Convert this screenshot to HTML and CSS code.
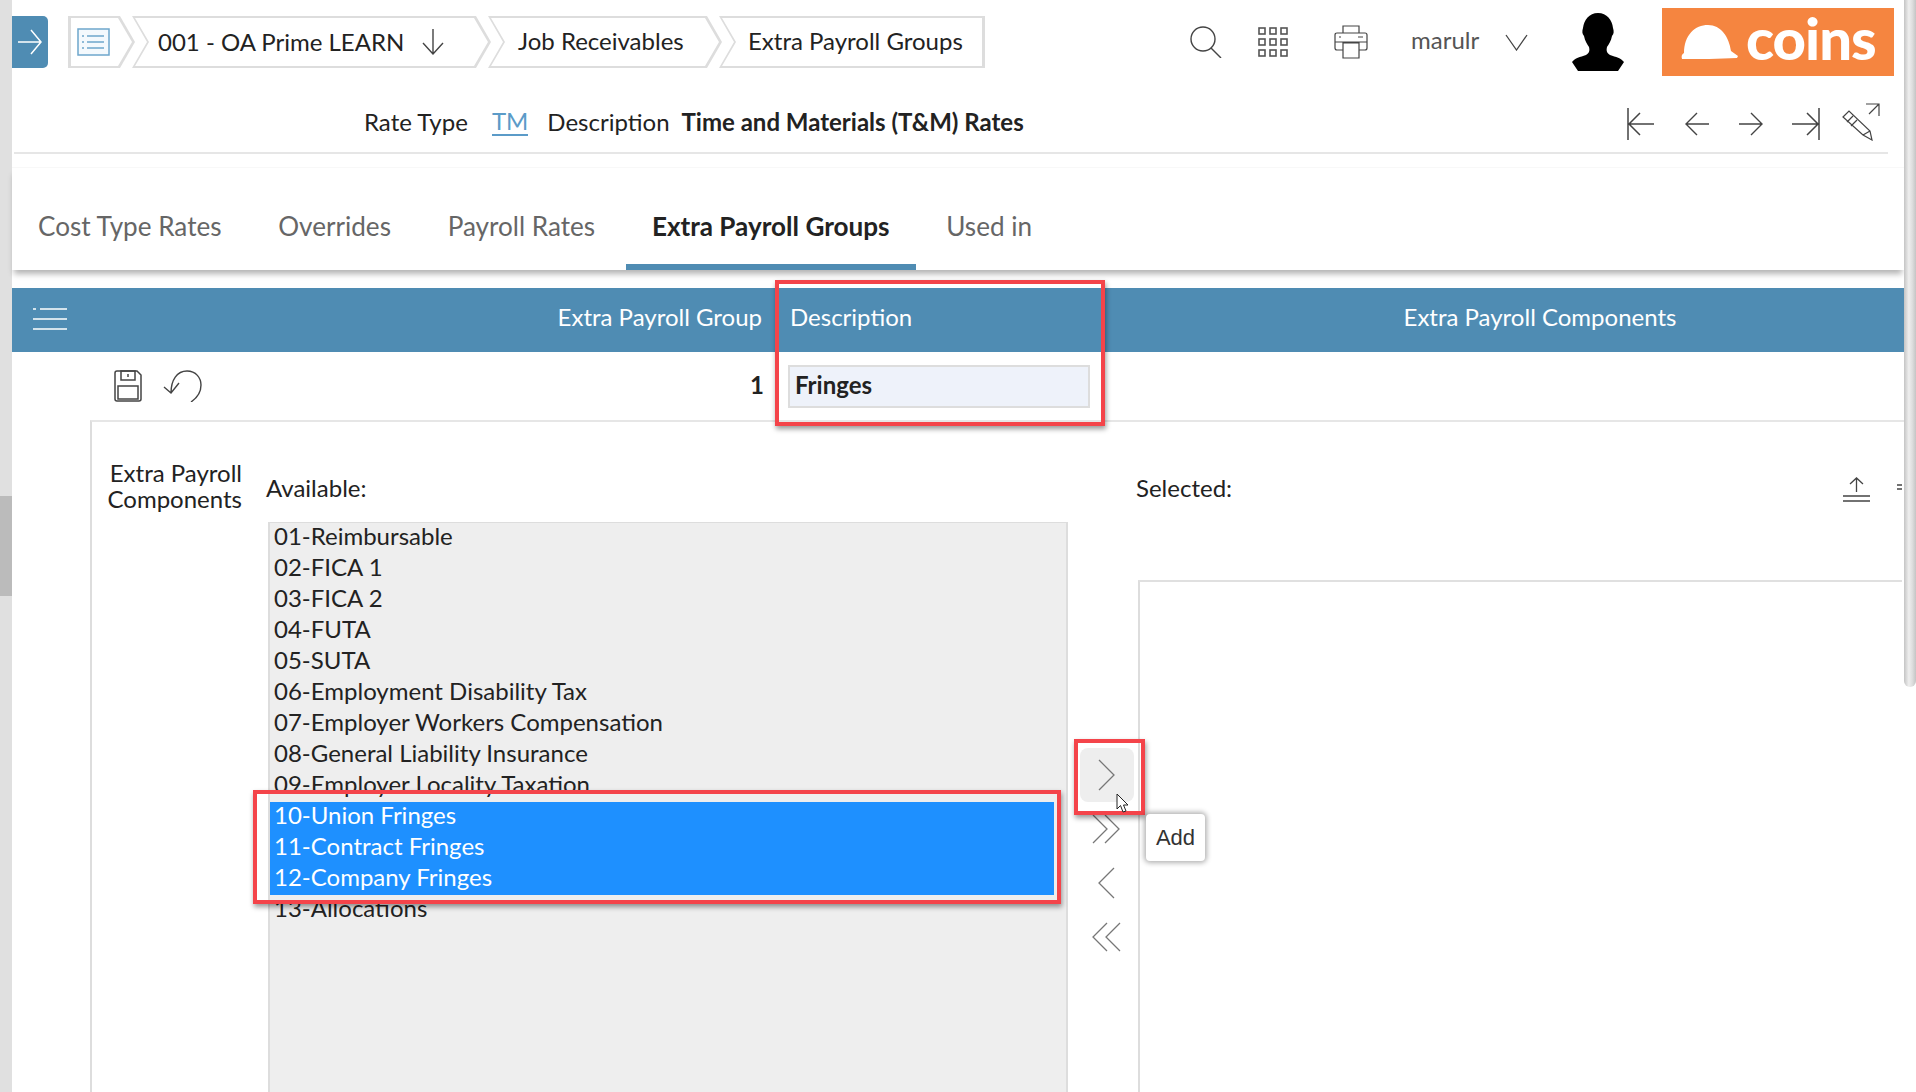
FILE: index.html
```html
<!DOCTYPE html>
<html lang="en">
<head>
    <meta charset="UTF-8">
    <title>Extra Payroll Groups</title>
    <link rel="stylesheet" href="styles.css">
</head>
<body>
<div class="page">
    <div class="rail"><div class="rail-thumb"></div></div>

    <div class="main">
        <div class="topbar">
            <button class="menu-toggle">
                <svg width="24" height="26" viewBox="0 0 24 26"><path d="M0 13H23M13 1L23 13L13 25" fill="none" stroke="#fff" stroke-width="1.5"/></svg>
            </button>
            <div class="crumbs">
                <div class="crumb crumb-first">
                    <svg width="33" height="28" viewBox="0 0 33 28"><rect x="1" y="1" width="31" height="26" fill="#f4f9fd" stroke="#6ea6cc" stroke-width="1.5"/><path d="M5 8H7M10 8H27M5 14H7M10 14H27M5 20H7M10 20H27" stroke="#6ea6cc" stroke-width="1.5"/></svg>
                </div>
                <div class="crumb crumb-job">001 - OA Prime LEARN
                    <svg class="crumb-arrow" width="24" height="26" viewBox="0 0 24 26"><path d="M12 0V25M2 14L12 25L22 14" fill="none" stroke="#444" stroke-width="1.4"/></svg>
                </div>
                <div class="crumb crumb-recv">Job Receivables</div>
                <div class="crumb crumb-last">Extra Payroll Groups</div>
            </div>

            <div class="top-right">
                <svg class="ico-search" width="32" height="32" viewBox="0 0 32 32"><circle cx="13" cy="13" r="12" fill="none" stroke="#444" stroke-width="1.4"/><path d="M21 22L31 32" stroke="#444" stroke-width="1.4"/></svg>
                <svg class="ico-grid" width="30" height="30" viewBox="0 0 30 30" fill="none" stroke="#555" stroke-width="1.6">
                    <rect x="1" y="1" width="6" height="6"/><rect x="12" y="1" width="6" height="6"/><rect x="23" y="1" width="6" height="6"/>
                    <rect x="1" y="12" width="6" height="6"/><rect x="12" y="12" width="6" height="6"/><rect x="23" y="12" width="6" height="6"/>
                    <rect x="1" y="23" width="6" height="6"/><rect x="12" y="23" width="6" height="6"/><rect x="23" y="23" width="6" height="6"/>
                </svg>
                <svg class="ico-print" width="34" height="34" viewBox="0 0 34 34" fill="none" stroke="#444" stroke-width="1.2"><path d="M9 8V1H25V8"/><path d="M9 25H3Q1 25 1 23V10Q1 8 3 8H31Q33 8 33 10V23Q33 25 31 25H25"/><path d="M9 18H25V33H9ZM1 17H33M5 12H7M24 12H29"/></svg>
                <span class="user-name">marulr</span>
                <svg class="ico-chev" width="23" height="17" viewBox="0 0 23 17"><path d="M1 1L11.5 16L22 1" fill="none" stroke="#444" stroke-width="1.3"/></svg>
                <svg class="ico-person" width="52" height="58" viewBox="0 0 52 58"><path d="M26 0C35 0 40 7 41 15C42 18 42 21 40 23C39 28 37 31 35 34C34 38 35 40 38 42C44 44 49 45 52 49L46 58H6L0 49C3 45 8 44 14 42C17 40 18 38 17 34C15 31 13 28 12 23C10 21 10 18 11 15C12 7 17 0 26 0Z" fill="#000"/></svg>
                <div class="logo">
                    <svg width="58" height="34" viewBox="0 0 58 34"><path d="M1 34C0 31 1 29 3 28C3 10 14 0 27 0C40 0 48 12 50 26L57 31L56 33C38 34 18 34 1 34Z" fill="#fff"/></svg>
                    <span class="logo-text">coins</span>
                </div>
            </div>
        </div>

        <div class="meta-row">
            <span class="meta-label">Rate Type</span>
            <a class="meta-link">TM</a>
            <span class="meta-label meta-desc">Description</span>
            <strong class="meta-value">Time and Materials (T&amp;M) Rates</strong>
            <div class="record-nav">
                <svg width="28" height="32" viewBox="0 0 28 32" fill="none" stroke="#444" stroke-width="1.5"><path d="M1 0V32M27 16H2M13 5L2 16L13 27"/></svg>
                <svg class="nav-prev" width="24" height="24" viewBox="0 0 24 24" fill="none" stroke="#444" stroke-width="1.4"><path d="M24 12H1M12 1L1 12L12 23"/></svg>
                <svg class="nav-next" width="24" height="24" viewBox="0 0 24 24" fill="none" stroke="#444" stroke-width="1.4"><path d="M0 12H23M12 1L23 12L12 23"/></svg>
                <svg class="nav-last" width="28" height="32" viewBox="0 0 28 32" fill="none" stroke="#444" stroke-width="1.5"><path d="M27 0V32M0 16H26M15 5L26 16L15 27"/></svg>
                <svg class="nav-edit" width="38" height="38" viewBox="0 0 38 38" fill="none" stroke="#444" stroke-width="1.2"><path d="M1 14L7 8L28 28L30 37L21 32ZM5 19L11 13M9 23L15 17M21 32L28 28M24 1H37V13M37 1L27 11"/></svg>
            </div>
        </div>

        <div class="tabs">
            <div class="tab">Cost Type Rates</div>
            <div class="tab">Overrides</div>
            <div class="tab">Payroll Rates</div>
            <div class="tab tab-active">Extra Payroll Groups</div>
            <div class="tab">Used in</div>
        </div>

        <div class="grid-head">
            <div class="col-group">
                <svg class="ico-lines" width="34" height="22" viewBox="0 0 34 22"><path d="M0 1H3M7 1H34M0 11H34M0 21H34" stroke="#fff" stroke-width="1.5"/></svg>
                <span>Extra Payroll Group</span>
            </div>
            <div class="col-desc">Description</div>
            <div class="col-comp">Extra Payroll Components</div>
        </div>

        <div class="edit-row">
            <div class="col-group">
                <svg class="ico-save" width="28" height="32" viewBox="0 0 28 32" fill="none" stroke="#444" stroke-width="1.5"><path d="M1 3Q1 1 3 1H23L27 5V29Q27 31 25 31H3Q1 31 1 29Z"/><rect x="7" y="1" width="14" height="9"/><path d="M14 4V7"/><rect x="4" y="16" width="20" height="13"/></svg>
                <svg class="ico-undo" width="39" height="32" viewBox="0 0 39 32" fill="none" stroke="#444" stroke-width="1.4"><path d="M8 23C8 10 14 1 24 1C33 1 38 8 38 15C38 23 34 28 28 32M1 17L8 23L16 13"/></svg>
                <strong class="row-id">1</strong>
            </div>
            <div class="col-desc"><div class="text-input">Fringes</div></div>
        </div>

        <div class="panel">
            <div class="panel-label">Extra Payroll<br>Components</div>

            <div class="avail-col">
                <div class="pick-label">Available:</div>
                <div class="list">
                    <div class="item">01-Reimbursable</div>
                    <div class="item">02-FICA 1</div>
                    <div class="item">03-FICA 2</div>
                    <div class="item">04-FUTA</div>
                    <div class="item">05-SUTA</div>
                    <div class="item">06-Employment Disability Tax</div>
                    <div class="item">07-Employer Workers Compensation</div>
                    <div class="item">08-General Liability Insurance</div>
                    <div class="item">09-Employer Locality Taxation</div>
                    <div class="item item-selected">10-Union Fringes</div>
                    <div class="item item-selected">11-Contract Fringes</div>
                    <div class="item item-selected">12-Company Fringes</div>
                    <div class="item">13-Allocations</div>
                </div>
            </div>

            <div class="move-col">
                <button class="move-btn move-btn-hover"><svg width="30" height="32" viewBox="0 0 30 32"><path d="M7 1L22 16L7 31" fill="none" stroke="#777" stroke-width="1.3"/></svg></button>
                <button class="move-btn"><svg width="30" height="32" viewBox="0 0 30 32" fill="none" stroke="#777" stroke-width="1.3"><path d="M1 2L15 16L1 30M13 2L27 16L13 30"/></svg></button>
                <button class="move-btn"><svg width="30" height="32" viewBox="0 0 30 32"><path d="M22 1L7 16L22 31" fill="none" stroke="#777" stroke-width="1.3"/></svg></button>
                <button class="move-btn"><svg width="30" height="32" viewBox="0 0 30 32" fill="none" stroke="#777" stroke-width="1.3"><path d="M15 2L1 16L15 30M28 2L14 16L28 30"/></svg></button>
            </div>

            <div class="sel-col">
                <div class="sel-head">
                    <div class="pick-label">Selected:</div>
                    <svg class="ico-upload" width="27" height="25" viewBox="0 0 27 25" fill="none" stroke="#444" stroke-width="1.3"><path d="M13.500 15V1M7 7L13.500 1L20 7M0 19H27M0 24H27"/></svg>
                    <svg class="ico-tiny" width="5" height="6" viewBox="0 0 5 6"><path d="M0 1H5M0 5H5" stroke="#444" stroke-width="1.3"/></svg>
                </div>
                <div class="sel-box"></div>
            </div>
        </div>
    </div>

    <div class="scrollbar"><div class="scroll-thumb"></div></div>

    <!-- annotations drawn on top of the screenshot -->
    <div class="callout callout-desc"></div>
    <div class="callout callout-rows"></div>
    <div class="callout callout-add"></div>
    <div class="tooltip">Add</div>
    <svg class="cursor" width="13" height="20" viewBox="0 0 13 20"><path d="M1 1V16L4.500 12.500L7 19L10 18L7.500 12H12Z" fill="#fff" stroke="#222" stroke-width="1"/></svg>
</div>
</body>
</html>
```

FILE: styles.css
```css
body {
    margin: 0;
    font-family: Lato, "Open Sans", sans-serif;
    color: #222;
    background-color: #fff;
}
button {
    border: none;
    padding: 0;
    background: none;
}
svg {
    display: block;
    flex-shrink: 0;
}
.page {
    position: relative;
    display: flex;
    height: 1092px;
    overflow: hidden;
}
.rail {
    width: 12px;
    background-color: #e0e0e0;
    padding-top: 496px;
    box-sizing: border-box;
}
.rail-thumb {
    height: 100px;
    background-color: #bbb;
}
.main {
    flex: 1;
    min-width: 0;
    display: flex;
    flex-direction: column;
}
.scrollbar {
    width: 12px;
}
.scroll-thumb {
    height: 687px;
    border-radius: 0 0 6px 6px;
    background: linear-gradient(to right, #c4c4c4, #eee 40%, #ddd 70%, #c4c4c4);
}

/* top bar */
.topbar {
    display: flex;
    align-items: center;
    height: 84px;
    flex-shrink: 0;
}
.menu-toggle {
    width: 36px;
    height: 52px;
    background-color: #4f8cb3;
    border-radius: 0 5px 5px 0;
    display: flex;
    align-items: center;
    justify-content: center;
}
.crumbs {
    display: flex;
    margin-left: 20px;
    font-size: 24px;
}
.crumb {
    position: relative;
    height: 52px;
    display: flex;
    align-items: center;
    background-color: #ddd;
    margin-right: -3px;
    clip-path: polygon(0 0, calc(100% - 15px) 0, 100% 50%, calc(100% - 15px) 100%, 0 100%, 15px 50%);
    z-index: 0;
}
.crumb::before {
    content: "";
    position: absolute;
    inset: 2px 3px;
    background-color: #fff;
    clip-path: polygon(0 0, calc(100% - 14px) 0, 100% 50%, calc(100% - 14px) 100%, 0 100%, 14px 50%);
    z-index: -1;
}
.crumb-first {
    width: 67px;
    padding-left: 9px;
    box-sizing: border-box;
    clip-path: polygon(0 0, calc(100% - 15px) 0, 100% 50%, calc(100% - 15px) 100%, 0 100%);
}
.crumb-first::before {
    clip-path: polygon(0 0, calc(100% - 14px) 0, 100% 50%, calc(100% - 14px) 100%, 0 100%);
}
.crumb-job {
    width: 359px;
    padding: 0 0 2px 26px;
    box-sizing: border-box;
}
.crumb-arrow {
    margin: 2px 0 0 17px;
}
.crumb-recv {
    width: 234px;
    padding: 0 0 4px 30px;
    box-sizing: border-box;
}
.crumb-last {
    width: 266px;
    padding: 0 0 4px 29px;
    box-sizing: border-box;
    margin-right: 0;
    clip-path: polygon(0 0, 100% 0, 100% 100%, 0 100%, 15px 50%);
}
.crumb-last::before {
    clip-path: polygon(0 0, 100% 0, 100% 100%, 0 100%, 14px 50%);
}
.top-right {
    margin-left: auto;
    margin-right: 10px;
    display: flex;
    align-items: center;
}
.ico-grid { margin-left: 36px; }
.ico-print { margin-left: 46px; }
.user-name {
    margin-left: 43px;
    width: 68px;
    font-size: 24px;
    color: #555;
    padding-bottom: 6px;
}
.ico-chev { margin-left: 26px; }
.ico-person { margin-left: 44px; }
.logo {
    margin-left: 38px;
    width: 232px;
    height: 68px;
    background-color: #f58540;
    display: flex;
    align-items: center;
    box-sizing: border-box;
    padding-left: 19px;
}
.logo-text {
    margin-left: 7px;
    font-size: 58px;
    font-weight: 900;
    letter-spacing: -1px;
    color: #fff;
    line-height: 60px;
    padding-bottom: 8px;
}

/* record header */
.meta-row {
    display: flex;
    align-items: center;
    height: 62px;
    flex-shrink: 0;
    margin: 0 16px 0 2px;
    padding: 6px 0 0 350px;
    border-bottom: 2px solid #e6e6e6;
    font-size: 24px;
}
.meta-link {
    margin-left: 24px;
    color: #5b9bc8;
    border-bottom: 2px solid #5b9bc8;
    line-height: 27px;
}
.meta-desc { margin-left: 19px; }
.meta-value { margin-left: 12px; }
.record-nav {
    margin: 6px 8px 0 auto;
    display: flex;
    align-items: center;
}
.nav-prev { margin-left: 30px; }
.nav-next { margin-left: 30px; }
.nav-last { margin-left: 29px; }
.nav-edit { margin-left: 22px; margin-top: -4px; }

/* tabs */
.tabs {
    display: flex;
    gap: 4.75px;
    height: 103px;
    flex-shrink: 0;
    margin-top: 13px;
    box-sizing: border-box;
    border-top: 1px solid #f8f8f8;
    box-shadow: 0 6px 6px -2px rgba(0, 0, 0, 0.3);
}
.tab {
    display: flex;
    align-items: flex-end;
    padding: 0 26px 28px;
    font-size: 26.1px;
    color: #666;
    box-sizing: border-box;
}
.tab-active {
    color: #222;
    font-weight: 700;
    padding-bottom: 22px;
    border-bottom: 6px solid #4f8cb3;
}

/* grid */
.grid-head, .edit-row {
    display: grid;
    grid-template-columns: 766px 398px 1fr;
    align-items: center;
    flex-shrink: 0;
}
.grid-head {
    margin-top: 18px;
    height: 64px;
    box-sizing: border-box;
    padding-bottom: 7px;
    background-color: #4f8cb3;
    color: #fff;
    font-size: 24px;
}
.edit-row {
    height: 68px;
    font-size: 24px;
}
.col-group {
    display: flex;
    align-items: center;
    justify-content: flex-end;
    padding-right: 16px;
}
.col-desc { padding-left: 12px; }
.col-comp { text-align: center; }
.ico-lines {
    margin: 5px auto 0 21px;
}
.ico-save { margin-left: 102px; }
.ico-undo { margin-left: 21px; margin-right: auto; }
.row-id { margin: -3px -2px 0 0; }
.edit-row .col-desc { padding-left: 10px; }
.text-input {
    width: 302px;
    height: 43px;
    box-sizing: border-box;
    border: 2px solid #ddd;
    background-color: #eef2fa;
    padding-left: 5px;
    font-weight: 700;
    line-height: 36px;
}

/* shuttle panel */
.panel {
    flex: 1;
    display: flex;
    margin-left: 78px;
    border-top: 2px solid #e6e6e6;
    border-left: 2px solid #ddd;
    min-height: 0;
}
.panel-label {
    width: 150px;
    padding-top: 38px;
    box-sizing: border-box;
    text-align: right;
    font-size: 24px;
    line-height: 26px;
}
.avail-col {
    width: 826px;
    padding: 51px 0 0 24px;
    box-sizing: border-box;
    display: flex;
    flex-direction: column;
}
.pick-label {
    font-size: 24px;
    line-height: 30px;
}
.list {
    flex: 1;
    margin: 19px 0 0 2px;
    width: 800px;
    box-sizing: border-box;
    border: 2px solid #ddd;
    border-top-width: 1px;
    border-bottom: none;
    background-color: #eee;
    padding-right: 12px;
    overflow: hidden;
}
.item {
    height: 31px;
    line-height: 26px;
    padding-left: 4px;
    font-size: 24px;
    white-space: nowrap;
}
.item-selected {
    background-color: #1e90ff;
    color: #fff;
}
.move-col {
    width: 70px;
    padding: 326px 0 0 12px;
    box-sizing: border-box;
}
.move-btn {
    width: 54px;
    height: 54px;
    display: flex;
    align-items: center;
    justify-content: center;
}
.move-btn-hover {
    background-color: #eee;
    border-radius: 8px;
}
.sel-col {
    flex: 1;
    display: flex;
    flex-direction: column;
    padding-top: 51px;
    margin-right: 2px;
    min-width: 0;
}
.sel-head {
    display: flex;
    align-items: center;
    margin-left: -2px;
    height: 30px;
}
.ico-upload { margin-left: auto; margin-top: 3px; }
.ico-tiny { margin-left: 27px; margin-top: -3px; }
.sel-box {
    flex: 1;
    margin-top: 77px;
    border-top: 2px solid #e0e0e0;
    border-left: 2px solid #ddd;
}

/* annotations */
.callout {
    position: absolute;
    box-sizing: border-box;
    border: 4px solid #f4444a;
    box-shadow: 1px 3px 5px rgba(0, 0, 0, 0.4);
}
.callout-desc {
    left: 775px;
    top: 280px;
    width: 330px;
    height: 146px;
}
.callout-rows {
    left: 253px;
    top: 790px;
    width: 808px;
    height: 114px;
}
.callout-add {
    left: 1074px;
    top: 739px;
    width: 71px;
    height: 76px;
}
.tooltip {
    position: absolute;
    left: 1146px;
    top: 814px;
    width: 59px;
    height: 47px;
    box-sizing: border-box;
    background-color: #fff;
    border-radius: 4px;
    box-shadow: 0 0 5px 2px rgba(0, 0, 0, 0.3);
    font-family: "Liberation Sans", Arial, sans-serif;
    font-size: 22px;
    color: #333;
    text-align: center;
    line-height: 47px;
}
.cursor {
    position: absolute;
    left: 1116px;
    top: 793px;
}
```
